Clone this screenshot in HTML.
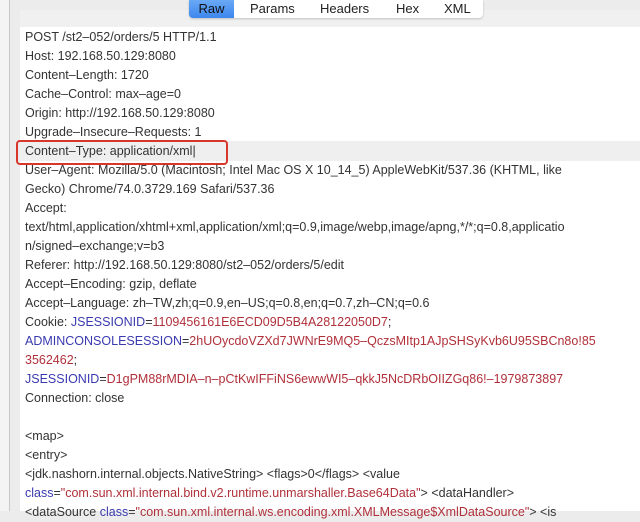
<!DOCTYPE html>
<html><head><style>
body{margin:0;width:640px;height:511px;overflow:hidden;background:#ececec;font-family:"Liberation Sans",sans-serif;position:relative}
.side{position:absolute;left:0;top:0;width:9px;height:511px;background:#f4f4f4;border-right:1px solid #c8c8c8}
.panel{position:absolute;left:20px;top:10px;width:620px;height:501px;background:#fff}
.topband{position:absolute;left:20px;top:10px;width:620px;height:17px;background:#f0f0f0}
.tabs{position:absolute;left:189px;top:0;height:18px;width:294px;background:#fff;border-radius:0 0 4px 4px;box-shadow:0 1px 2px rgba(0,0,0,.2);font-size:13px}
.tabs span{position:absolute;top:0;line-height:17px;color:#222}
.raw{left:0;width:45px;height:18px;background:linear-gradient(#6aa9f5,#3c86ee);border-radius:0 0 0 4px;text-align:center;color:#111!important}
.hl{position:absolute;left:20px;top:141px;width:620px;height:20px;background:#efefef}
.box{position:absolute;left:16px;top:140px;width:208px;height:21px;border:2px solid #d9362c;border-radius:4px}
.txt{position:absolute;left:25px;top:28px;font-size:12.5px;line-height:19px;color:#333;white-space:pre}
.b{color:#3a3ab0}.r{color:#b0303a}
</style></head><body>
<div class="side"></div>
<div class="panel"></div>
<div class="topband"></div>
<div class="hl"></div>
<div class="tabs"><span class="raw">Raw</span><span style="left:61px">Params</span><span style="left:131px">Headers</span><span style="left:207px">Hex</span><span style="left:255px">XML</span></div>
<div class="box"></div>
<div class="txt">POST /st2–052/orders/5 HTTP/1.1
Host: 192.168.50.129:8080
Content–Length: 1720
Cache–Control: max–age=0
Origin: http://192.168.50.129:8080
Upgrade–Insecure–Requests: 1
Content–Type: application/xml|
User–Agent: Mozilla/5.0 (Macintosh; Intel Mac OS X 10_14_5) AppleWebKit/537.36 (KHTML, like
Gecko) Chrome/74.0.3729.169 Safari/537.36
Accept:
text/html,application/xhtml+xml,application/xml;q=0.9,image/webp,image/apng,*/*;q=0.8,applicatio
n/signed–exchange;v=b3
Referer: http://192.168.50.129:8080/st2–052/orders/5/edit
Accept–Encoding: gzip, deflate
Accept–Language: zh–TW,zh;q=0.9,en–US;q=0.8,en;q=0.7,zh–CN;q=0.6
Cookie: <span class="b">JSESSIONID</span>=<span class="r">1109456161E6ECD09D5B4A28122050D7</span>;
<span class="b">ADMINCONSOLESESSION</span>=<span class="r">2hUOycdoVZXd7JWNrE9MQ5–QczsMItp1AJpSHSyKvb6U95SBCn8o!85</span>
<span class="r">3562462</span>;
<span class="b">JSESSIONID</span>=<span class="r">D1gPM88rMDIA–n–pCtKwIFFiNS6ewwWI5–qkkJ5NcDRbOIIZGq86!–1979873897</span>
Connection: close

&lt;map&gt;
&lt;entry&gt;
&lt;jdk.nashorn.internal.objects.NativeString&gt; &lt;flags&gt;0&lt;/flags&gt; &lt;value
<span class="b">class</span>=<span class="r">"com.sun.xml.internal.bind.v2.runtime.unmarshaller.Base64Data"</span>&gt; &lt;dataHandler&gt;
&lt;dataSource <span class="b">class</span>=<span class="r">"com.sun.xml.internal.ws.encoding.xml.XMLMessage$XmlDataSource"</span>&gt; &lt;is</div>
</body></html>
